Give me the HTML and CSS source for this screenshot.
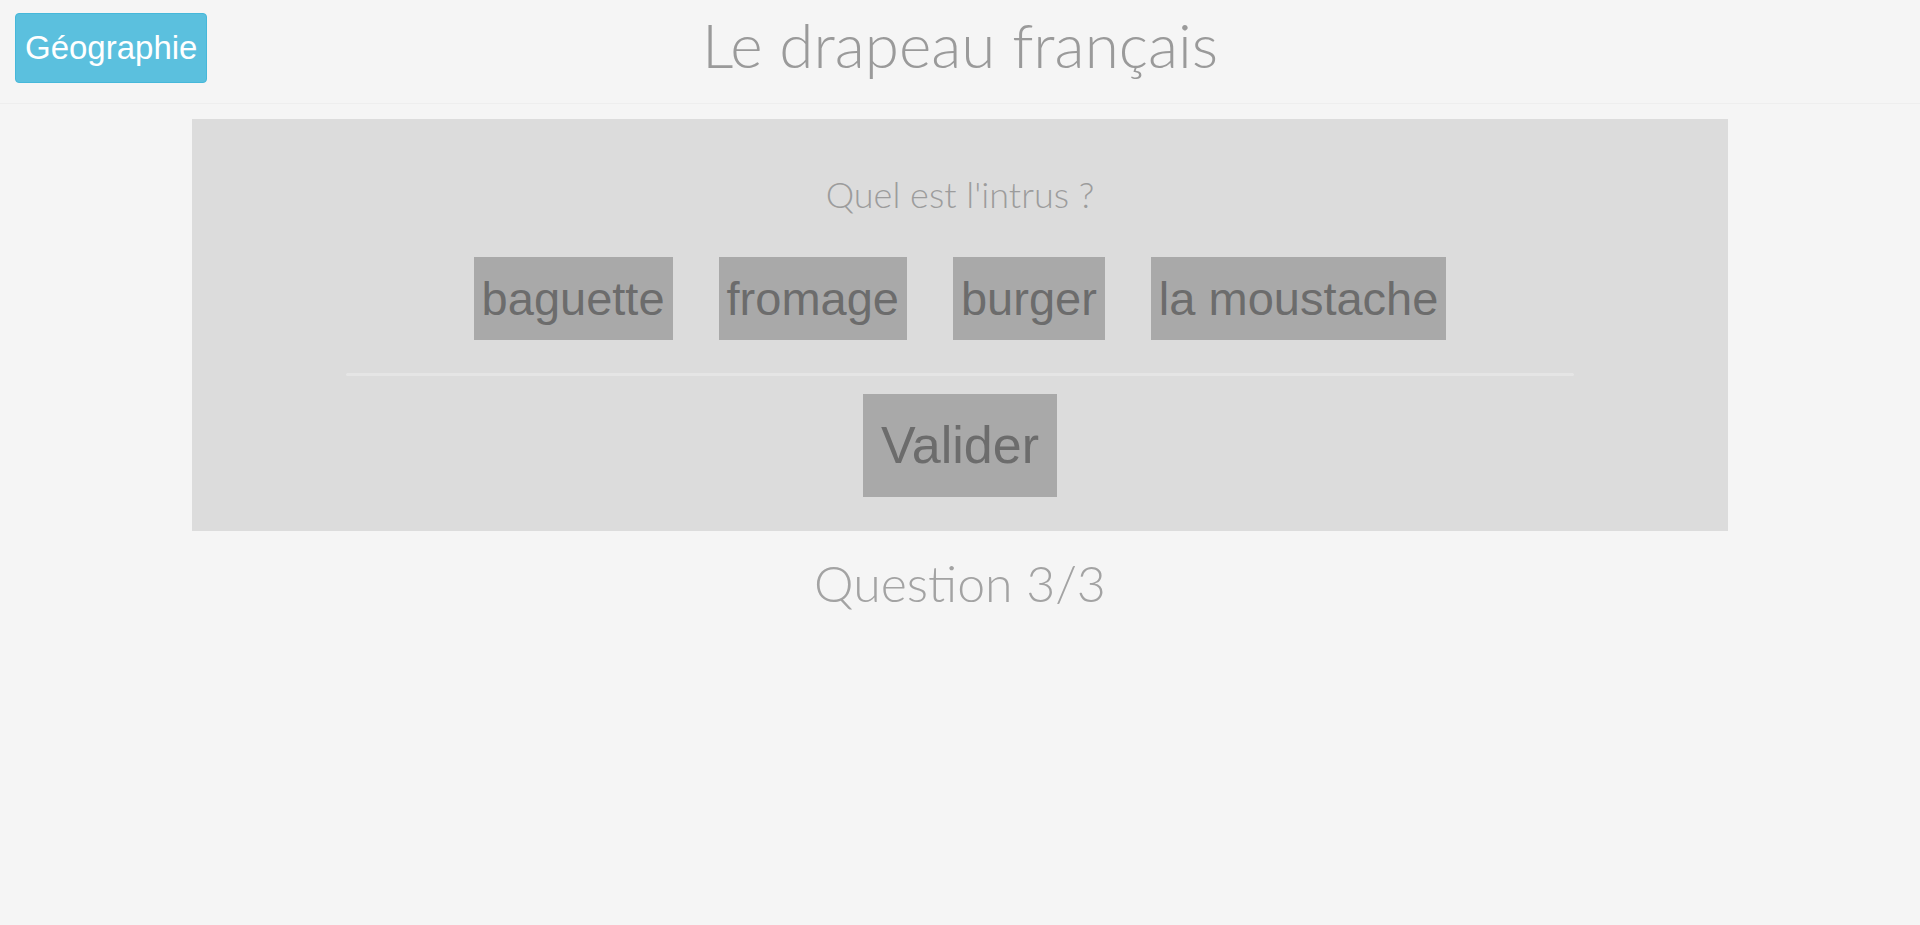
FILE: index.html
```html
<!DOCTYPE html>
<html lang="fr">
<head>
<meta charset="utf-8">
<title>Le drapeau français</title>
<link rel="stylesheet" href="styles.css">
</head>
<body>
<header class="topbar">
  <button class="btn-home" type="button">Géographie</button>
  <h1 class="title">Le drapeau français</h1>
</header>
<main class="quiz">
  <section class="panel">
    <p class="question">Quel est l'intrus ?</p>
    <div class="choices">
      <button class="choice" type="button">baguette</button>
      <button class="choice" type="button">fromage</button>
      <button class="choice" type="button">burger</button>
      <button class="choice" type="button">la moustache</button>
    </div>
    <hr class="divider">
    <button class="validate" type="button">Valider</button>
  </section>
  <p class="progress">Question 3/3</p>
</main>
</body>
</html>
```

FILE: styles.css
```css
html, body {
  margin: 0;
  padding: 0;
}

body {
  background: #f5f5f5;
  font-family: Lato, "Liberation Sans", sans-serif;
  color: #999;
}

.topbar {
  box-sizing: border-box;
  height: 104px;
  padding: 8px 15px 0;
  display: grid;
  grid-template-columns: 1fr auto 1fr;
  align-items: start;
  border-bottom: 1px solid #eeeeee;
}

.btn-home {
  justify-self: start;
  margin-top: 5px;
  background: #5bc0de;
  border: 1px solid #46b8da;
  border-radius: 4px;
  color: #fff;
  font-family: "Liberation Sans", Arial, sans-serif;
  font-size: 33px;
  line-height: 48px;
  padding: 10px 9px;
  cursor: pointer;
}

.title {
  margin: 0;
  font-weight: 300;
  font-size: 62px;
  line-height: 72px;
  color: #9a9a9a;
  text-align: center;
}

.quiz {
  display: flex;
  flex-direction: column;
  align-items: center;
}

.panel {
  box-sizing: border-box;
  width: 80%;
  margin-top: 15px;
  height: 412px;
  background: #dcdcdc;
  padding-top: 54px;
  display: flex;
  flex-direction: column;
  align-items: center;
}

.question {
  margin: 0;
  font-size: 36px;
  line-height: 42px;
  font-weight: 300;
  color: #9c9c9c;
}

.choices {
  margin-top: 42px;
  display: flex;
  justify-content: center;
  gap: 46px;
}

.choice,
.validate {
  background: #a9a9a9;
  border: none;
  border-radius: 0;
  color: #6c6c6c;
  font-family: "Liberation Sans", Arial, sans-serif;
  cursor: pointer;
}

.choice {
  font-size: 47px;
  line-height: 59px;
  padding: 12px 8px;
}

.divider {
  width: 80%;
  height: 3px;
  margin: 33px 0 0;
  border: none;
  border-radius: 2px;
  background: #e5e5e5;
}

.validate {
  margin-top: 18px;
  font-size: 52px;
  line-height: 67px;
  padding: 18px 18px;
}

.progress {
  margin: 22px 0 0;
  font-size: 50px;
  line-height: 60px;
  font-weight: 300;
  color: #a3a3a3;
}
```
